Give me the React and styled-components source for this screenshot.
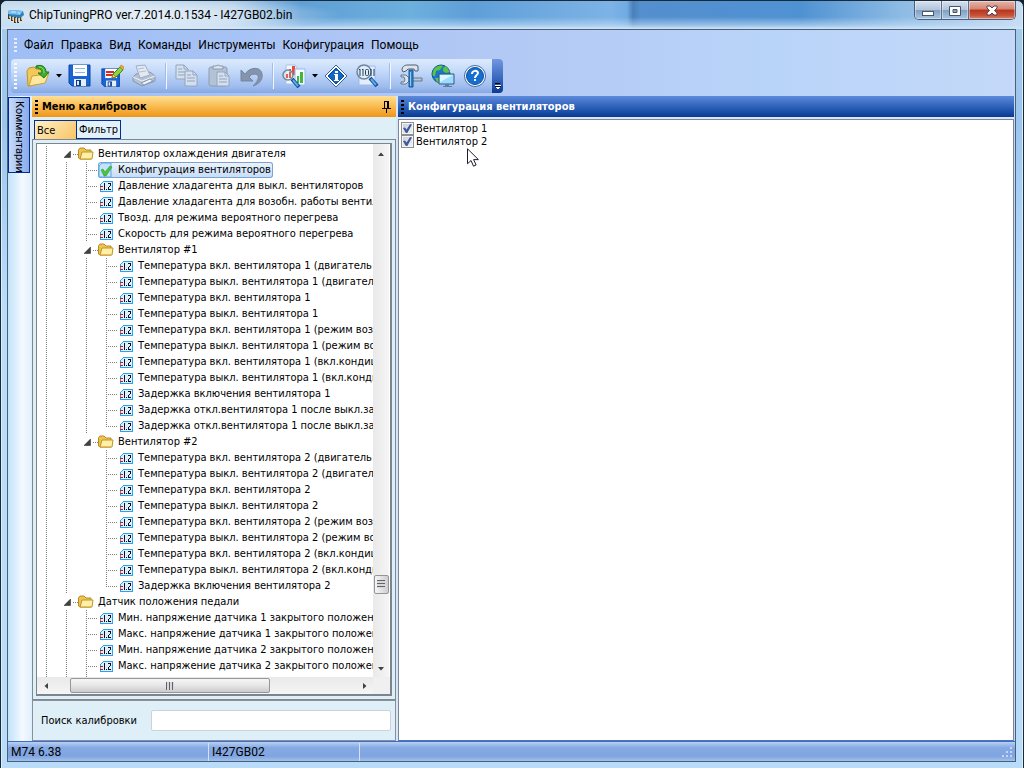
import React, { useState } from "react";
import styled, { createGlobalStyle, css } from "styled-components";

const tahoma = `Tahoma, "DejaVu Sans Condensed", "DejaVu Sans", sans-serif`;
const segoe = `"Segoe UI", Roboto, "Noto Sans", sans-serif`;

const GlobalStyle = createGlobalStyle`
  *, *::before, *::after { box-sizing: border-box; }
  body { margin: 0; background: #10202c; font: 11px/16px ${tahoma}; color: #000; }
  button { font: inherit; color: inherit; padding: 0; margin: 0; border: 0; background: none; }
  ul { list-style: none; margin: 0; padding: 0; }
  svg { display: block; flex: none; }
`;

/* ---------- window frame ---------- */

const Window = styled.div`
  min-height: 100vh;
  display: flex;
  flex-direction: column;
  padding: 0 7px 6px 6px;
  border: 1px solid #1a2a3a;
  border-radius: 7px 7px 0 0;
  box-shadow: inset 0 1px 0 #e8f4fc, inset 1px 0 0 #d8eefa, inset -1px 0 0 #d8eefa;
  background: linear-gradient(180deg, #a8cdea 0, #9cc5ee 120px, #b9dcfb 300px, #b9dcfb 100%);
`;

const TitleBar = styled.header`
  display: flex;
  align-items: flex-start;
  height: 28px;
  margin: 0 -6px;
  padding-left: 7px;
  border-radius: 6px 6px 0 0;
  background:
    radial-gradient(ellipse 190px 18px at 150px 14px, #ffffffb0, #ffffff60 60%, transparent),
    linear-gradient(180deg, transparent 16px, #c4ddf699 24px, #d0e4f8 28px),
    linear-gradient(90deg, #c3dbee 0, #a9c9e6 230px, #5f9fd6 300px, #6cb0dd 410px, #5e9fd8 470px, #7db3e6 610px, #6fabe2 626px, #4a80bb 632px, #548fcf 640px, #4f92d2 800px, #8dbbe4 900px, #c8dcf0 100%);
`;

const Title = styled.h1`
  flex: 1;
  margin: 0 0 0 5px;
  font: 12px/28px ${segoe};
`;

const TitleIcon = styled.div`
  padding-top: 6px;
`;

const WindowButtons = styled.div`
  display: flex;
  height: 19px;
  margin-right: 6px;
  border: 1px solid #4b5f78;
  border-top: 0;
  border-radius: 0 0 5px 5px;
  overflow: hidden;
`;

const WindowButton = styled.button`
  display: flex;
  align-items: center;
  justify-content: center;
  width: ${(p) => (p.$close ? 46 : 27)}px;
  border-right: 1px solid #5a6e8a;
  box-shadow: inset 0 0 0 1px #ffffff66;
  background: linear-gradient(180deg, #d5e2f0 0, #b3c5da 48%, #7f9fc2 50%, #a9c6e2 100%);
  ${(p) =>
    p.$close &&
    css`
      border-right: 0;
      background: linear-gradient(180deg, #e6b5aa 0, #d48472 45%, #b8341c 50%, #c8523a 80%, #d98a74 100%);
    `}
`;

const Client = styled.div`
  flex: 1;
  display: flex;
  flex-direction: column;
  border: 1px solid #4a6076;
  background: linear-gradient(90deg, #9ebef5 0, #b3c9f5 50%, #b9d4f9 76%, #c4d9f9 100%);
`;

/* ---------- menu and toolbar ---------- */

const MenuBar = styled.nav`
  display: flex;
  align-items: center;
  gap: 7px;
  height: 29px;
  padding-left: 6px;
`;

const MenuItem = styled.button`
  font: 12px/16px ${segoe};
`;

const Grip = styled.span`
  flex: none;
  width: 3px;
  height: ${(p) => p.$h}px;
  margin-right: ${(p) => p.$gap || 0}px;
  background: repeating-linear-gradient(180deg, ${(p) => p.$color} 0 2px, transparent 2px 4px);
`;

const Toolbar = styled.div`
  display: flex;
  align-items: center;
  align-self: flex-start;
  height: 34px;
  margin: 0 0 3px 3px;
  padding-left: 3px;
  border-radius: 4px;
  background: linear-gradient(180deg, #dceafd 0, #c5dafa 35%, #9fbdee 80%, #86a8e2 100%);
`;

const ToolButton = styled.button`
  display: flex;
  align-items: center;
  justify-content: center;
  width: 32px;
  height: 30px;
`;

const DropButton = styled.button`
  display: flex;
  align-items: center;
  justify-content: center;
  width: 10px;
  height: 30px;
`;

const Separator = styled.span`
  width: 2px;
  height: 26px;
  margin: 0 4px 0 5px;
  border-left: 1px solid #a3bdea;
  background: #f1f6ff;
`;

const ToolbarEnd = styled.button`
  display: flex;
  align-items: flex-end;
  justify-content: center;
  width: 11px;
  height: 34px;
  margin-left: 1px;
  padding-bottom: 2px;
  border-radius: 0 4px 4px 0;
  background: linear-gradient(180deg, #7297df 0, #3465bd 60%, #0a3a95 100%);
`;

/* ---------- panels ---------- */

const Main = styled.main`
  flex: 1;
  display: flex;
  padding-right: 1px;
`;

const SideStrip = styled.div`
  width: 24px;
  padding-top: 1px;
  background: linear-gradient(90deg, #c1e2fa 0, #f4faff 60%, #e0eefc 100%);
`;

const SideTab = styled.button`
  width: 22px;
  height: 76px;
  writing-mode: vertical-rl;
  text-align: left;
  padding: 3px 0 0;
  font: 11px/18px ${segoe};
  border: 1px solid #002d96;
  background: linear-gradient(90deg, #c6dafa, #8aabea);
`;

const LeftPanel = styled.section`
  display: flex;
  flex-direction: column;
  width: 364px;
  background: #dfeff7;
`;

const Splitter = styled.div`
  width: 2px;
  background: #d5e5fb;
`;

const PanelHead = styled.h2`
  display: flex;
  align-items: center;
  height: 21px;
  margin: 0;
  padding: 0 5px 0 3px;
  font: bold 11px/20px ${tahoma};
  ${(p) =>
    p.$active
      ? css`
          background: linear-gradient(180deg, #ffdf95 0, #f9bb4f 50%, #ee9518 100%);
        `
      : css`
          color: #fff;
          background: linear-gradient(180deg, #5d8adb 0, #2f62bb 50%, #073a91 100%);
        `}
`;

const HeadText = styled.span`
  flex: 1;
`;

const Tabs = styled.div`
  display: flex;
  align-items: flex-end;
  height: 22px;
  padding: 0 2px;
`;

const Tab = styled.button`
  height: 19px;
  width: ${(p) => (p.$on ? 42 : 45)}px;
  text-align: left;
  padding: ${(p) => (p.$on ? 2 : 0)}px 0 0 2px;
  font: 11px/16px ${tahoma};
  border: 1px solid #002d96;
  border-bottom-width: ${(p) => (p.$on ? 0 : 1)}px;
  border-right-width: ${(p) => (p.$on ? 0 : 1)}px;
  background: ${(p) =>
    p.$on ? "linear-gradient(135deg, #fff0c4, #f8c566)" : "#e3f1fa"};
`;

const TreeFrame = styled.div`
  flex: 1;
  display: flex;
  padding: 3px;
  border: 1px solid #7f8790;
`;

const TreeBox = styled.div`
  flex: 1;
  min-width: 0;
  display: grid;
  grid-template-columns: minmax(0, 1fr) 17px;
  grid-template-rows: 1fr 17px;
  border: 1px solid #7c858e;
  border-width: 1px 2px 2px 1px;
  background: #fff;
`;

const TreeView = styled.ul`
  display: flex;
  flex-direction: column;
  overflow: hidden;
  padding: 2px 0 0 1px;
`;

const TreeRow = styled.li`
  display: flex;
  height: ${(p) => (p.$filler ? 3 : 16)}px;
  white-space: nowrap;
`;

const dotsV = "repeating-linear-gradient(180deg, #808080 0 1px, transparent 1px 2px)";
const dotsH = "repeating-linear-gradient(90deg, #808080 0 1px, transparent 1px 2px)";

const Cell = styled.span`
  flex: none;
  display: flex;
  align-items: center;
  width: 20px;
  height: 100%;
  padding-left: 6px;
  background-repeat: no-repeat;
  ${(p) =>
    ({
      line: css`
        background-image: ${dotsV};
        background-size: 1px 100%;
        background-position: 8px 0;
      `,
      leaf: css`
        background-image: ${dotsV}, ${dotsH};
        background-size: 1px 100%, 11px 1px;
        background-position: 8px 0, 8px 8px;
      `,
      last: css`
        background-image: ${dotsV}, ${dotsH};
        background-size: 1px 8px, 11px 1px;
        background-position: 8px 0, 8px 8px;
      `,
      toggle: css`
        background-image: ${dotsH};
        background-size: 5px 1px;
        background-position: 15px 8px;
      `,
    })[p.$kind]}
`;

const NodeLabel = styled.span`
  display: flex;
  align-items: center;
  height: 16px;
  border-radius: 3px;
  ${(p) =>
    p.$selected &&
    css`
      box-shadow: inset 0 0 0 1px #7da2ce;
      background: linear-gradient(180deg, #ebf4fd, #c4dcf8);
      padding-right: 2px;
    `}
`;

const NodeText = styled.span`
  padding-left: 4px;
  line-height: 16px;
`;

const VScroll = styled.div`
  display: flex;
  flex-direction: column;
  align-items: center;
  margin-right: 1px;
  padding: 7px 0 5px;
  background: linear-gradient(90deg, #e9e9ea, #f5f5f5);
`;

const HScroll = styled.div`
  display: flex;
  align-items: center;
  padding: 0 5px 0 6px;
  background: linear-gradient(180deg, #e9e9ea, #f5f5f5);
`;

const Corner = styled.div`
  background: #f0f0f0;
`;

const Spacer = styled.span`
  flex: ${(p) => p.$grow};
`;

const Thumb = styled.div`
  display: flex;
  align-items: center;
  justify-content: center;
  border: 1px solid #969696;
  border-radius: 2px;
  ${(p) =>
    p.$vertical
      ? css`
          width: 15px;
          height: 19px;
          background: linear-gradient(90deg, #f6f6f6, #cfcfd2);
        `
      : css`
          width: 200px;
          height: 15px;
          background: linear-gradient(180deg, #f6f6f6 0, #e6e6e8 50%, #cbcbce 100%);
        `}
`;

const Ridges = styled.span`
  width: 8px;
  height: 8px;
  background: repeating-linear-gradient(
    ${(p) => (p.$vertical ? "180deg" : "90deg")},
    #606468 0 1px,
    #d8d8d8 1px 3px
  );
`;

const SearchBar = styled.div`
  display: flex;
  align-items: center;
  justify-content: space-between;
  height: 41px;
  padding: 0 4px 0 8px;
  border: 1px solid #8a9097;
`;

const SearchInput = styled.input`
  width: 240px;
  height: 21px;
  padding: 0 4px;
  font: 11px/16px ${tahoma};
  border: 1px solid #c9d3dc;
  border-radius: 2px;
  background: #fff;
`;

const RightPanel = styled.section`
  flex: 1;
  min-width: 0;
  display: flex;
  flex-direction: column;
  background: #d5e5fb;
`;

const Sheet = styled.div`
  position: relative;
  flex: 1;
  margin-top: 2px;
  padding: 2px;
  border: 1px solid #7d8794;
  border-bottom-color: #4a74c4;
  background: #fff;
`;

const CheckRow = styled.label`
  display: flex;
  align-items: center;
  gap: 2px;
  height: 13px;
  line-height: 13px;
`;

const CheckBox = styled.input`
  appearance: none;
  display: grid;
  place-items: center;
  flex: none;
  width: 13px;
  height: 13px;
  margin: 0;
  border: 1px solid #8e8f8f;
  background: linear-gradient(135deg, #c9ced6, #f3f4f6);
  outline: 1px solid #f4f4f4;
  outline-offset: -2px;
  &:checked::after {
    content: "";
    width: 9px;
    height: 9px;
    background: #40589c;
    clip-path: polygon(0 45%, 22% 38%, 40% 62%, 78% 0, 100% 5%, 48% 100%, 32% 100%);
  }
`;

const Pointer = styled.svg`
  position: absolute;
  left: 68px;
  top: 28px;
`;

const StatusBar = styled.footer`
  display: flex;
  align-items: center;
  height: 20px;
  border-top: 1px solid #3f6cc4;
  background: linear-gradient(180deg, #b8d0f5 0, #85a9e2 30%, #7fa5e0 75%, #a2c1ee 100%);
`;

const StatusCell = styled.span`
  width: ${(p) => p.$w}px;
  padding-left: 3px;
  font: 12px/18px ${segoe};
  border-right: 1px solid #d3e2fa;
`;

const Resize = styled.svg`
  margin: 0 2px 0 auto;
`;

/* ---------- drawings ---------- */

const ChipIcon = () => (
  <svg width="16" height="17" viewBox="0 0 16 17">
    <path d="M1 7v5M4 9v5M7 10v6M10 10v6M13 8v6" stroke="#4a3a1c" strokeWidth="2" />
    <path d="M1.500 8v3M4.500 10v3M7.500 11v4M10.500 11v4M13.500 9v4" stroke="#d9b36a" />
    <path d="M0 4 4 3 15 4 16 8 12 11 1 9Z" fill="#2f7fbd" />
    <path d="M0 4 4 3 15 4 12 8 1 7Z" fill="#79c1ee" />
    <path d="M3 5h5M10 6h2" stroke="#c8ecff" />
  </svg>
);

const OpenIcon = () => (
  <svg width="24" height="24" viewBox="0 0 24 24">
    <path d="M1 7 3 4l5-1 2 2 9 1v12L4 22H2Z" fill="#f0c95a" stroke="#c2922a" />
    <path d="m3 22 3-10 8-1 9-2-4 10Z" fill="#ffe99c" stroke="#cda03a" />
    <path d="M10 2c6-2 10 1 10 6h3l-5 6-6-5h4c0-3-2-5-6-5Z" fill="#3fae2e" stroke="#1d7a18" />
    <path d="M13 3c4 0 5 3 5 6" fill="none" stroke="#9be07c" />
  </svg>
);

const DiskBody = () => (
  <g>
    <path d="M1 1h21v21H4l-3-3Z" fill="#1c64d0" stroke="#0b46a8" />
    <path d="M5 1h14v11H5Z" fill="#fff" />
    <path d="M6 15h12v7H6Z" fill="#e6eef8" />
    <path d="M8 16h5v6H8Z" fill="#0b3b8a" />
    <path d="M9 17h2v4H9Z" fill="#dfeaf8" />
  </g>
);

const SaveIcon = () => (
  <svg width="24" height="24" viewBox="0 0 24 24">
    <DiskBody />
    <path d="M7 4.500h10M7 8.500h10" stroke="#8db4e6" />
  </svg>
);

const SaveAsIcon = () => (
  <svg width="24" height="24" viewBox="0 0 24 24">
    <g transform="translate(1 4) scale(.840)">
      <DiskBody />
    </g>
    <path d="M6 8h8M6 11h7" stroke="#e0281c" strokeWidth="2" />
    <path d="m12 14 1-4 7-7 3 3-7 7Z" fill="#8fd13a" stroke="#3f8a1c" />
    <path d="m12 14 1-4 3 3Z" fill="#f7d27a" stroke="#6b4a12" strokeWidth=".500" />
    <path d="m20 3 1-2 3 2-1 3Z" fill="#f6a93a" stroke="#b46a1a" strokeWidth=".500" />
  </svg>
);

const PrintIcon = () => (
  <svg width="24" height="24" viewBox="0 0 24 24">
    <path d="m1 13 3-3 14-2 5 4v5l-13 5-9-5Z" fill="#b4c1d2" stroke="#8998ae" />
    <path d="m4 2 9-1 5 10-10 3Z" fill="#e2e9f2" stroke="#9fadc0" />
    <path d="m6 5 6-1M7 8l7-1" stroke="#b4c0d0" />
    <path d="m1 13 9 4 13-5" fill="none" stroke="#eef3f9" />
    <path d="m9 19 9-4 3 2-9 4Z" fill="#eef2f8" stroke="#8998ae" />
  </svg>
);

const Sheets = ({ x, y, h }) => (
  <g transform={`translate(${x} ${y})`}>
    <path d={`M1 1h8l4 4v${h}H1Z`} fill="#d5e0ef" stroke="#93a4bf" />
    <path d="M9 1v4h4" fill="none" stroke="#93a4bf" />
    <path d="M3 5h4M3 8h8M3 11h8" stroke="#91a3be" />
  </g>
);

const CopyIcon = () => (
  <svg width="24" height="24" viewBox="0 0 24 24">
    <Sheets x={0} y={0} h={10} />
    <Sheets x={9} y={6} h={11} />
  </svg>
);

const PasteIcon = () => (
  <svg width="24" height="24" viewBox="0 0 24 24">
    <rect x="2" y="3" width="18" height="19" rx="2" fill="#b4c2d5" stroke="#8c9cb4" />
    <path d="M6 5V2h3l2-1 2 1h3v3Z" fill="#dfe6ef" stroke="#8798b0" />
    <Sheets x={9} y={7} h={10} />
  </svg>
);

const UndoIcon = () => (
  <svg width="24" height="24" viewBox="0 0 24 24">
    <path d="M2 6v11h12l-4-4c4-5 11-3 9 2-1 3-3 5-5 7 6-2 10-6 9-12-1-7-11-8-17 0Z" fill="#8494ad" stroke="#7586a2" />
  </svg>
);

const Lens = ({ x, y, r }) => (
  <g>
    <path d={`m${x + r - 1} ${y + r - 1} 7 8`} stroke="#134f9a" strokeWidth="4" />
    <path d={`m${x + r} ${y + r} 5 6`} stroke="#58a8ef" strokeWidth="2" />
    <circle cx={x} cy={y} r={r} fill="#e3effbaa" stroke="#74859c" strokeWidth="1.500" />
  </g>
);

const FindChartIcon = () => (
  <svg width="24" height="24" viewBox="0 0 24 24">
    <path d="M4 1h9l2 3v16H4Z" fill="#f2f8ff" stroke="#a6c4e8" />
    <path d="M7 5h2v8H7ZM10 2h3v9h-3Z" fill="#ec4a36" />
    <path d="M13 5h10v16H13Z" fill="#f7fbff" stroke="#8fbce8" />
    <path d="M15 12h2v7h-2ZM18 8h3v11h-3Z" fill="#41b83c" />
    <Lens x={6} y={11} r={5} />
    <path d="M4 10h2v4H4ZM7 8h2v6H7Z" fill="#e2604c" />
  </svg>
);

const InfoIcon = () => (
  <svg width="24" height="24" viewBox="0 0 24 24">
    <path d="M12 1 23 12 12 23 1 12Z" fill="#fff" stroke="#3b5f96" />
    <path d="M12 4 20 12 12 20 4 12Z" fill="#1267c4" stroke="#0a489a" />
    <path d="M11 7h3v2h-3M10 10h4v6h1v1h-5v-1h1v-5h-1Z" fill="#fff" />
  </svg>
);

const HexIcon = () => (
  <svg width="24" height="24" viewBox="0 0 24 24">
    <path d="M3 2h16v19H3Z" fill="#e3eefc" stroke="#9bbbe6" />
    <Lens x={8} y={8} r={7} />
    <path d="m3 6 1-1v7M6 6l1-1v7M14 6l1-1v7M18 5v7" fill="none" stroke="#27405f" />
    <rect x="9.500" y="5.500" width="3" height="6" rx="1" fill="none" stroke="#27405f" />
  </svg>
);

const ToolsIcon = () => (
  <svg width="24" height="24" viewBox="0 0 24 24">
    <path d="M8 14h15v3H8Z" fill="#bcc6d2" stroke="#66788c" />
    <path d="M2 11h5l3 3v3l-3 3H2v-2h3l1-2-1-3H2Z" fill="#dde3ea" stroke="#66788c" />
    <path d="M10 6h4v17h-4Z" fill="#2d83cc" stroke="#195591" />
    <path d="M11 8h1v14h-1Z" fill="#8fcaf6" />
    <path d="M3 6c0-3 2-5 6-5h8l2 1v5h-3l-1-2H9L7 7 4 8Z" fill="#dce3ea" stroke="#4e6074" />
  </svg>
);

const GlobeIcon = () => (
  <svg width="24" height="24" viewBox="0 0 24 24">
    <circle cx="10" cy="10" r="9" fill="#1976c8" stroke="#105494" />
    <path d="M3 5c3-4 8-4 9-3L9 6 5 7l-1 5-2 0C1 9 2 7 3 5ZM12 4l3-2 4 6-4 1-3-2ZM4 14l4 0 1 5-3-1Z" fill="#5cc441" />
    <path d="M8 10h15v10H8Z" fill="#9bdcff" stroke="#36597e" />
    <path d="M9 11h13L9 18Z" fill="#dcf5ff" />
    <path d="M14 20h4v2h3v1h-9v-1h2Z" fill="#607d9b" />
  </svg>
);

const HelpIcon = () => (
  <svg width="24" height="24" viewBox="0 0 24 24">
    <circle cx="12" cy="12" r="10.500" fill="#fff" stroke="#3e6ba6" />
    <circle cx="12" cy="12" r="8.500" fill="#146fd0" stroke="#0c4ea4" />
    <path d="M9 10c0-4 6-4 6-1 0 2-3 2-3 5" fill="none" stroke="#fff" strokeWidth="2" />
    <path d="M11 15h2v2h-2Z" fill="#fff" />
  </svg>
);

const Arrow = ({ dir = "down", color = "#000", w = 6 }) => {
  const turn = { down: 0, left: 90, up: 180, right: 270 }[dir];
  return (
    <svg width={w} height={w} viewBox="0 0 6 6">
      <path d="M0 1h6L3 4.500Z" fill={color} transform={`rotate(${turn} 3 3)`} />
    </svg>
  );
};

const MoreIcon = () => (
  <svg width="7" height="8" viewBox="0 0 7 8" shapeRendering="crispEdges">
    <path d="M1 0h5v1H1M1 3h6L4 7Z" fill="#000" />
    <path d="M1 2h6v1H1M2 4h4L4 7Z" fill="#fff" />
  </svg>
);

const PinIcon = () => (
  <svg width="9" height="12" viewBox="0 0 9 12" shapeRendering="crispEdges">
    <path d="M2 0h5v7H2ZM3 1v6h2V1ZM0 7h9v1H0ZM4 8h1v4H4Z" fill="#000" fillRule="evenodd" />
  </svg>
);

const FolderIcon = () => (
  <svg width="16" height="16" viewBox="0 0 16 16">
    <path d="M.500 4 2 2h4l2 2h5v9H2L.500 12Z" fill="#edc452" stroke="#b98a1e" />
    <path d="M4 6h11l-1 7H2Z" fill="#fff0a4" stroke="#c0922a" />
  </svg>
);

const ValueIcon = () => (
  <svg width="16" height="16" viewBox="0 0 16 16" shapeRendering="crispEdges">
    <path d="M5 3h10v11H2V6Z" fill="#2f9ff0" />
    <path d="M5 4h9v9H3V6Z" fill="#d9f1ff" />
    <path d="M2 8h3v1H2ZM2 11h3v1H2Z" fill="#e01010" />
    <path d="M6 5h1v7H6ZM8 11h1v1H8ZM10 5h3v1h-3ZM12 6h1v2h-1ZM11 8h1v1h-1ZM10 9h1v2h-1ZM10 11h3v1h-3Z" fill="#101018" />
  </svg>
);

const CheckedIcon = () => (
  <svg width="16" height="16" viewBox="0 0 16 16">
    <path d="M4 1h9v14H1V4Z" fill="#c3e2fb" stroke="#5ba8e4" />
    <path d="m3 8 2-1 2 3 5-6 2 1-6 9H6Z" fill="#4cc23f" stroke="#258f25" strokeWidth=".500" />
  </svg>
);

const Expander = () => (
  <svg width="7" height="7" viewBox="0 0 7 7">
    <path d="M6.500 0v6.500H0Z" fill="#404040" stroke="#202020" strokeWidth=".500" />
  </svg>
);

/* ---------- data ---------- */

const MENU = ["Файл", "Правка", "Вид", "Команды", "Инструменты", "Конфигурация", "Помощь"];

const L1 = ["line", "line", "leaf"];
const L2 = ["line", "line", "line", "leaf"];
const L2b = ["line", "line", "", "leaf"];

const leaf = (cells, text) => ({ cells, text, icon: ValueIcon });
const folder = (cells, text) => ({ cells: [...cells, "toggle"], text, icon: FolderIcon });

const TREE = [
  folder(["line"], "Вентилятор охлаждения двигателя"),
  { cells: L1, text: "Конфигурация вентиляторов", icon: CheckedIcon, selected: true },
  leaf(L1, "Давление хладагента для выкл. вентиляторов"),
  leaf(L1, "Давление хладагента для возобн. работы вентиляторов"),
  leaf(L1, "Твозд. для режима вероятного перегрева"),
  leaf(L1, "Скорость для режима вероятного перегрева"),
  folder(["line", "line"], "Вентилятор #1"),
  leaf(L2, "Температура вкл. вентилятора 1 (двигатель остановлен)"),
  leaf(L2, "Температура выкл. вентилятора 1 (двигатель остановлен)"),
  leaf(L2, "Температура вкл. вентилятора 1"),
  leaf(L2, "Температура выкл. вентилятора 1"),
  leaf(L2, "Температура вкл. вентилятора 1 (режим возможного перегрева)"),
  leaf(L2, "Температура выкл. вентилятора 1 (режим возможного перегрева)"),
  leaf(L2, "Температура вкл. вентилятора 1 (вкл.кондиционер)"),
  leaf(L2, "Температура выкл. вентилятора 1 (вкл.кондиционер)"),
  leaf(L2, "Задержка включения вентилятора 1"),
  leaf(L2, "Задержка откл.вентилятора 1 после выкл.зажигания"),
  leaf(["line", "line", "line", "last"], "Задержка откл.вентилятора 1 после выкл.зажигания"),
  folder(["line", "line"], "Вентилятор #2"),
  leaf(L2b, "Температура вкл. вентилятора 2 (двигатель остановлен)"),
  leaf(L2b, "Температура выкл. вентилятора 2 (двигатель остановлен)"),
  leaf(L2b, "Температура вкл. вентилятора 2"),
  leaf(L2b, "Температура выкл. вентилятора 2"),
  leaf(L2b, "Температура вкл. вентилятора 2 (режим возможного перегрева)"),
  leaf(L2b, "Температура выкл. вентилятора 2 (режим возможного перегрева)"),
  leaf(L2b, "Температура вкл. вентилятора 2 (вкл.кондиционер)"),
  leaf(L2b, "Температура выкл. вентилятора 2 (вкл.кондиционер)"),
  leaf(["line", "line", "", "last"], "Задержка включения вентилятора 2"),
  folder(["line"], "Датчик положения педали"),
  leaf(L1, "Мин. напряжение датчика 1 закрытого положения"),
  leaf(L1, "Макс. напряжение датчика 1 закрытого положения"),
  leaf(L1, "Мин. напряжение датчика 2 закрытого положения"),
  leaf(L1, "Макс. напряжение датчика 2 закрытого положения"),
];

const Tool = ({ label, children }) => (
  <ToolButton aria-label={label}>{children}</ToolButton>
);

const Drop = ({ label }) => (
  <DropButton aria-label={label}>
    <Arrow />
  </DropButton>
);

const Node = ({ node }) => {
  const Icon = node.icon;
  return (
    <TreeRow role="treeitem" aria-selected={!!node.selected}>
      {node.cells.map((kind, i) => (
        <Cell key={i} $kind={kind}>
          {kind === "toggle" && <Expander />}
        </Cell>
      ))}
      <NodeLabel $selected={node.selected}>
        <Icon />
        <NodeText>{node.text}</NodeText>
      </NodeLabel>
    </TreeRow>
  );
};

export default function App() {
  const [fans, setFans] = useState([true, true]);
  const toggle = (i) => setFans(fans.map((on, k) => (k === i ? !on : on)));

  return (
    <>
      <GlobalStyle />
      <Window>
        <TitleBar>
          <TitleIcon>
            <ChipIcon />
          </TitleIcon>
          <Title>ChipTuningPRO ver.7.2014.0.1534 - I427GB02.bin</Title>
          <WindowButtons>
            <WindowButton aria-label="Свернуть">
              <svg width="12" height="17" viewBox="0 0 12 17">
                <rect x=".500" y="9.500" width="11" height="4" fill="#fff" stroke="#48566c" />
              </svg>
            </WindowButton>
            <WindowButton aria-label="Развернуть">
              <svg width="12" height="17" viewBox="0 0 12 17">
                <path d="M.500 4.500h11v9H.500ZM4 7.500v3h4v-3Z" fill="#fff" fillRule="evenodd" stroke="#48566c" />
              </svg>
            </WindowButton>
            <WindowButton $close aria-label="Закрыть">
              <svg width="12" height="11" viewBox="0 0 12 11">
                <path d="M1 1h3l2 2 2-2h3v2L8.500 5.500 11 8v2H8L6 8l-2 2H1V8l2.500-2.500L1 3Z" fill="#fff" stroke="#54414c" />
              </svg>
            </WindowButton>
          </WindowButtons>
        </TitleBar>

        <Client>
          <MenuBar>
            <Grip $h={14} $color="#e4eefc" />
            {MENU.map((m) => (
              <MenuItem key={m}>{m}</MenuItem>
            ))}
          </MenuBar>

          <Toolbar>
            <Grip $h={26} $gap={5} $color="#f5f9ff" />
            <Tool label="Открыть"><OpenIcon /></Tool>
            <Drop label="Недавние файлы" />
            <Tool label="Сохранить"><SaveIcon /></Tool>
            <Tool label="Сохранить как"><SaveAsIcon /></Tool>
            <Tool label="Печать"><PrintIcon /></Tool>
            <Separator />
            <Tool label="Копировать"><CopyIcon /></Tool>
            <Tool label="Вставить"><PasteIcon /></Tool>
            <Tool label="Отменить"><UndoIcon /></Tool>
            <Separator />
            <Tool label="Сравнить"><FindChartIcon /></Tool>
            <Drop label="Варианты сравнения" />
            <Tool label="Сведения"><InfoIcon /></Tool>
            <Tool label="Просмотр кода"><HexIcon /></Tool>
            <Separator />
            <Tool label="Настройки"><ToolsIcon /></Tool>
            <Tool label="Сеть"><GlobeIcon /></Tool>
            <Tool label="Справка"><HelpIcon /></Tool>
            <ToolbarEnd aria-label="Параметры панели">
              <MoreIcon />
            </ToolbarEnd>
          </Toolbar>

          <Main>
            <SideStrip>
              <SideTab>Комментарии</SideTab>
            </SideStrip>

            <LeftPanel>
              <PanelHead $active>
                <Grip $h={14} $gap={4} $color="#000" />
                <HeadText>Меню калибровок</HeadText>
                <PinIcon />
              </PanelHead>
              <Tabs role="tablist">
                <Tab role="tab" aria-selected="true" $on>Все</Tab>
                <Tab role="tab" aria-selected="false">Фильтр</Tab>
              </Tabs>
              <TreeFrame>
                <TreeBox>
                  <TreeView role="tree">
                    {TREE.map((node, i) => (
                      <Node key={i} node={node} />
                    ))}
                    <TreeRow $filler role="presentation">
                      <Cell $kind="line" />
                      <Cell $kind="line" />
                      <Cell $kind="line" />
                    </TreeRow>
                  </TreeView>
                  <VScroll>
                    <Arrow dir="up" color="#404040" />
                    <Spacer $grow={415} />
                    <Thumb $vertical>
                      <Ridges $vertical />
                    </Thumb>
                    <Spacer $grow={72} />
                    <Arrow color="#404040" />
                  </VScroll>
                  <HScroll>
                    <Arrow dir="left" color="#404040" />
                    <Spacer $grow={21} />
                    <Thumb>
                      <Ridges />
                    </Thumb>
                    <Spacer $grow={92} />
                    <Arrow dir="right" color="#404040" />
                  </HScroll>
                  <Corner />
                </TreeBox>
              </TreeFrame>
              <SearchBar>
                <label htmlFor="calibration-search">Поиск калибровки</label>
                <SearchInput id="calibration-search" type="text" />
              </SearchBar>
            </LeftPanel>

            <Splitter />

            <RightPanel>
              <PanelHead>
                <Grip $h={14} $gap={4} $color="#000" />
                <HeadText>Конфигурация вентиляторов</HeadText>
              </PanelHead>
              <Sheet>
                {fans.map((on, i) => (
                  <CheckRow key={i}>
                    <CheckBox type="checkbox" checked={on} onChange={() => toggle(i)} />
                    Вентилятор {i + 1}
                  </CheckRow>
                ))}
                <Pointer width="12" height="19" viewBox="0 0 12 19">
                  <path d="M.500.800v15l3.500-3.300 2.500 5.700 2.600-1.200-2.500-5.400h4.800Z" fill="#fff" stroke="#1c1c2c" />
                </Pointer>
              </Sheet>
            </RightPanel>
          </Main>

          <StatusBar>
            <StatusCell $w={201}>M74 6.38</StatusCell>
            <StatusCell $w={151}>I427GB02</StatusCell>
            <Resize width="12" height="12" viewBox="0 0 12 12">
              <path d="M9 1h2v2H9M9 5h2v2H9M5 5h2v2H5M9 9h2v2H9M5 9h2v2H5M1 9h2v2H1" fill="#c3d8f7" />
            </Resize>
          </StatusBar>
        </Client>
      </Window>
    </>
  );
}
